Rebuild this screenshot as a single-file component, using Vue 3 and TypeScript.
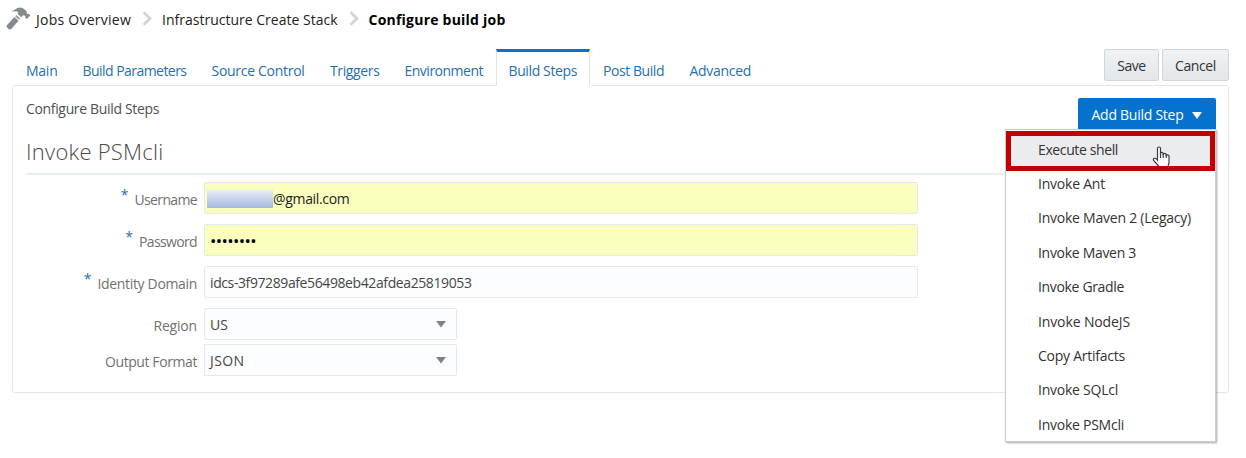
<script setup lang="ts">
import type { Directive } from 'vue'

interface Item { label: string; text: number }
interface Tab extends Item { slot: number }
interface Field extends Item {
  kind: 'user' | 'password' | 'text' | 'select'
  value: string
  valueWidth: number
  required: boolean
}

// Spreads a label's letters so that it takes up the given width in pixels.
const vFit: Directive<HTMLElement, number> = {
  mounted(el, { value }) {
    const count = (el.textContent ?? '').length
    const natural = el.getBoundingClientRect().width
    el.style.letterSpacing = `${(value - natural) / count}px`
  },
}

const crumbs: Item[] = [
  { label: 'Jobs Overview', text: 95 },
  { label: 'Infrastructure Create Stack', text: 175.5 },
]

const tabs: Tab[] = [
  { label: 'Main', text: 31.5, slot: 56.5 },
  { label: 'Build Parameters', text: 104, slot: 129 },
  { label: 'Source Control', text: 93, slot: 118.5 },
  { label: 'Triggers', text: 49.5, slot: 74.5 },
  { label: 'Environment', text: 78.5, slot: 104.5 },
  { label: 'Build Steps', text: 68.5, slot: 94 },
  { label: 'Post Build', text: 61, slot: 86.5 },
  { label: 'Advanced', text: 61.5, slot: 86 },
]

const fields: Field[] = [
  { label: 'Username', text: 62.5, kind: 'user', value: '@gmail.com', valueWidth: 76.5, required: true },
  { label: 'Password', text: 58, kind: 'password', value: '••••••••', valueWidth: 46, required: true },
  { label: 'Identity Domain', text: 99.5, kind: 'text', value: 'idcs-3f97289afe56498eb42afdea25819053', valueWidth: 261.5, required: true },
  { label: 'Region', text: 43.5, kind: 'select', value: 'US', valueWidth: 18, required: false },
  { label: 'Output Format', text: 92, kind: 'select', value: 'JSON', valueWidth: 34.5, required: false },
]

const steps: Item[] = [
  { label: 'Execute shell', text: 80 },
  { label: 'Invoke Ant', text: 67 },
  { label: 'Invoke Maven 2 (Legacy)', text: 153 },
  { label: 'Invoke Maven 3', text: 98 },
  { label: 'Invoke Gradle', text: 86 },
  { label: 'Invoke NodeJS', text: 92 },
  { label: 'Copy Artifacts', text: 87 },
  { label: 'Invoke SQLcl', text: 80 },
  { label: 'Invoke PSMcli', text: 86 },
]
</script>

<template>
  <div class="page">
    <nav class="crumbs">
      <svg class="hammer" width="25" height="24" viewBox="0 0 25 24">
        <path d="M5.5 4.8 11 1.3Q14-.1 16.8 1.2L20 3.6Q21 4.8 20.8 6.4L21.8 7.3 22.8 6.7 24.3 8.5 20.8 12 19.2 10.7 19.4 9.4 18.2 8.2 16.6 8.5 15.3 10.2 11.4 6.8 12.4 5.4Q10.5 3.5 5.5 4.8Z" fill="#858a8f" />
        <path d="M10.4 8 14.2 11.4 13 12.8 9.2 9.4Z" fill="#9a9ea2" />
        <path d="M8.5 10.1 12.5 13.7 5.5 21.8Q3.8 23.2 2 21.5T.6 18.4Z" fill="#858a8f" />
      </svg>
      <template v-for="c in crumbs" :key="c.label">
        <a><span v-fit="c.text">{{ c.label }}</span></a>
        <svg class="chevron" width="10" height="15" viewBox="0 0 10 15">
          <path d="M1.5 1.2 8 7.5 1.5 13.8" fill="none" stroke="#d2d4d6" stroke-width="2.8" />
        </svg>
      </template>
      <strong><span v-fit="137">Configure build job</span></strong>
    </nav>

    <div class="bar">
      <div class="tabs">
        <div v-for="t in tabs" :key="t.label" class="tab" :class="{ active: t.label === 'Build Steps' }" :style="{ width: t.slot + 'px' }">
          <span v-fit="t.text">{{ t.label }}</span>
        </div>
      </div>
      <div class="actions">
        <button class="save"><span v-fit="28.5">Save</span></button>
        <button class="cancel"><span v-fit="41">Cancel</span></button>
      </div>
    </div>

    <section class="panel">
      <div class="top">
        <span class="caption"><span v-fit="133">Configure Build Steps</span></span>
        <div class="adder">
          <button class="add">
            <span v-fit="92">Add Build Step</span>
            <svg width="10" height="7" viewBox="0 0 10 7"><path d="M0 0H10L5 7Z" fill="#fff" /></svg>
          </button>
          <ul class="menu">
            <li v-for="s in steps" :key="s.label"><span v-fit="s.text">{{ s.label }}</span></li>
            <svg class="pointer" width="19" height="21" viewBox="0 0 19 21">
              <path d="M5.5 14V2.2Q5.5 1 7 1T8.5 2.2V8.2V7Q8.5 6.2 9.7 6.4T11.2 7.5V9V7.8Q12.5 6.8 14.2 8.3V10V9Q15.8 8.4 17 9.8V17L15.7 21H7.5L2 15Q.7 13 2.2 12.4T5.5 14Z" fill="#fff" stroke="#3b3b4c" stroke-width="1.2" />
              <path d="M8.5 7V12M11.2 8V12M14.2 9V12" stroke="#3b3b4c" stroke-width="1.2" />
            </svg>
            <div class="highlight" />
          </ul>
        </div>
      </div>
      <h2><span v-fit="137.5">Invoke PSMcli</span></h2>
      <form>
        <div v-for="f in fields" :key="f.label" class="row" :class="f.kind">
          <label>
            <i v-if="f.required">*</i>
            <span v-fit="f.text">{{ f.label }}</span>
          </label>
          <div class="box">
            <b v-if="f.kind === 'user'" class="mask" />
            <span v-fit="f.valueWidth">{{ f.value }}</span>
            <svg v-if="f.kind === 'select'" width="10" height="7" viewBox="0 0 10 7"><path d="M0 0H10L5 6.5Z" fill="#7e8285" /></svg>
          </div>
        </div>
      </form>
    </section>
  </div>
</template>

<style>
body { background: #fff; }
</style>

<style scoped>
.page {
  box-sizing: border-box;
  width: 1246px;
  height: 458px;
  overflow: hidden;
  font: 14px/20px "Open Sans", "Noto Sans", sans-serif;
  color: #333;
  white-space: nowrap;
}
.page * { box-sizing: border-box; }
.crumbs {
  display: flex;
  align-items: center;
  height: 49px;
  padding: 0 0 9px 6px;
  color: #222;
}
.hammer { margin: -3px 5px 0 0; }
.chevron { margin: -3px 10px 0 11px; }
.crumbs strong { color: #000; font-weight: 700; }
.bar {
  display: flex;
  justify-content: space-between;
  height: 37px;
  margin: 0 17px 0 13.5px;
  position: relative;
  z-index: 1;
}
.tabs { display: flex; }
.tab {
  padding: 12px 0 0 12.5px;
  color: #2470b3;
}
.tab.active {
  margin: 0 .5px 0 -.5px;
  padding: 9px 0 0 11.5px;
  border: 1px solid #dfe4e9;
  border-width: 3px 1px 0;
  border-top-color: #0572ce;
  background: #fff;
}
.actions { display: flex; gap: 3px; }
button {
  display: flex;
  align-items: center;
  justify-content: center;
  margin: 0;
  padding: 0;
  font: inherit;
}
.actions button {
  height: 32px;
  padding-top: 1px;
  color: #333;
  background: linear-gradient(#f0f2f4, #e3e7ea);
  border: 1px solid #cfd6dc;
  border-radius: 2px;
}
.save { width: 55px; }
.cancel { width: 67px; }
.panel {
  width: 1217px;
  height: 308px;
  margin: -1px 0 0 12px;
  padding: 12px 12px 0 13px;
  border: 1px solid #dfe6ec;
  border-radius: 3px;
}
.top {
  display: flex;
  justify-content: space-between;
  height: 32px;
}
.caption {
  padding-top: 1px;
  color: #4f4f4f;
}
.adder { position: relative; }
.add {
  gap: 8px;
  width: 138px;
  height: 32px;
  padding: 2px 1px 0 0;
  color: #fff;
  background: #0572ce;
  border: 0;
  border-radius: 2px 2px 0 0;
}
.menu {
  position: absolute;
  z-index: 2;
  top: 31px;
  right: 0;
  width: 211px;
  height: 313px;
  margin: 0;
  padding: 2.6px 0 0;
  list-style: none;
  background: #fff;
  border: 1px solid #c6cfd7;
  box-shadow: 1px 1px 2px rgba(0, 0, 0, .35);
}
.menu li {
  height: 34.4px;
  padding: 7px 0 0 32px;
}
.menu li:first-child { background: #ebecee; }
.highlight {
  position: absolute;
  top: 1px;
  left: 0;
  width: 209px;
  height: 40px;
  border: 5px solid #c00000;
}
.pointer {
  position: absolute;
  top: 16px;
  left: 146px;
}
h2 {
  height: 45px;
  margin: 0;
  padding-top: 6px;
  font-size: 22px;
  font-weight: 300;
  line-height: 30px;
  color: #4a4a4a;
  border-bottom: 2px solid #e9eeee;
}
form { padding-top: 7px; }
.row {
  display: flex;
  height: 32px;
  margin-bottom: 10px;
}
.row.select { margin-bottom: 4px; }
label {
  display: flex;
  justify-content: flex-end;
  width: 178px;
  padding: 7.5px 7px 0 0;
  color: #717171;
}
label i {
  margin: -5px 6px 0 0;
  color: #2470b3;
  font-size: 14px;
  font-style: normal;
}
.box {
  display: flex;
  align-items: center;
  width: 714px;
  padding: 1px 10px 0 5px;
  background: #fcfdfe;
  border: 1px solid #e2e8ed;
  border-radius: 2px;
  color: #454545;
}
.user .box, .password .box { background: #faffbd; color: #222; }
.user .box { padding-left: 2px; }
.mask {
  width: 66px;
  height: 18px;
  background: linear-gradient(#e9eef8, #a4b9df);
}
.password .box span {
  color: #000;
  font-size: 17px;
}
.select .box {
  justify-content: space-between;
  width: 253px;
}
</style>
